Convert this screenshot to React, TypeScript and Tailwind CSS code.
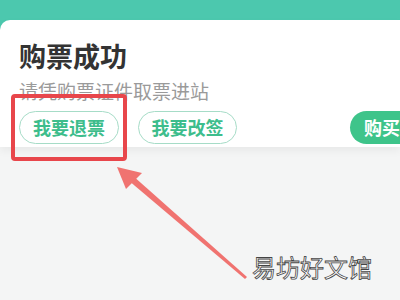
const cjk = { fontFamily: '"Noto Sans CJK SC", "Noto Sans", sans-serif' }

const App = () => {
  return (
    <div className="relative w-[400px] h-[300px] overflow-hidden bg-[#f4f5f5]" style={cjk}>
      {/* top bar */}
      <div className="h-[20px] bg-[#4cc8ae]" />

      {/* card */}
      <div className="bg-[#4cc8ae]">
        <div className="bg-white rounded-tl-[10px] pl-[19px] pt-[20px] pb-[3px] shadow-[0_4px_8px_rgba(0,0,0,0.05)]">
          <h1 className="text-[27px] leading-[32px] font-bold text-[#333333]">购票成功</h1>
          <p className="mt-[7px] text-[19px] leading-[24px] text-[#9a9a9a]">请凭购票证件取票进站</p>
          <div className="flex items-center mt-[8px] gap-[19px] w-[460px]">
            <button className="shrink-0 w-[100px] h-[33px] rounded-full border-[1.5px] border-[#a6dcc7] text-[#3dbd8c] text-[18px] font-bold">
              我要退票
            </button>
            <button className="shrink-0 w-[99px] h-[33px] rounded-full border-[1.5px] border-[#a6dcc7] text-[#3dbd8c] text-[18px] font-bold">
              我要改签
            </button>
            <button className="shrink-0 ml-[94px] w-[80px] h-[33px] rounded-full bg-[#3ec48a] text-white text-[18px] font-bold text-left pl-[14px]">
              购买
            </button>
          </div>
        </div>
      </div>

      {/* highlight box */}
      <div className="absolute left-[11px] top-[94px] w-[116px] h-[67px] border-[4px] border-[#e8464b] rounded-[4px]" />

      {/* arrow */}
      <svg className="absolute left-0 top-0" width="400" height="300" viewBox="0 0 400 300">
        <polygon points="247,277 245,279 128,180 132,175" fill="#f07370" />
        <polygon points="117,167 142,173 126,189" fill="#f07370" />
      </svg>

      {/* watermark */}
      <div
        className="absolute left-[252px] top-[253px] text-[24px] leading-[28px] text-white"
        style={{ WebkitTextStroke: '0.8px #444', fontFamily: '"Noto Sans CJK SC", sans-serif' }}
      >
        易坊好文馆
      </div>
    </div>
  )
}

export default App
